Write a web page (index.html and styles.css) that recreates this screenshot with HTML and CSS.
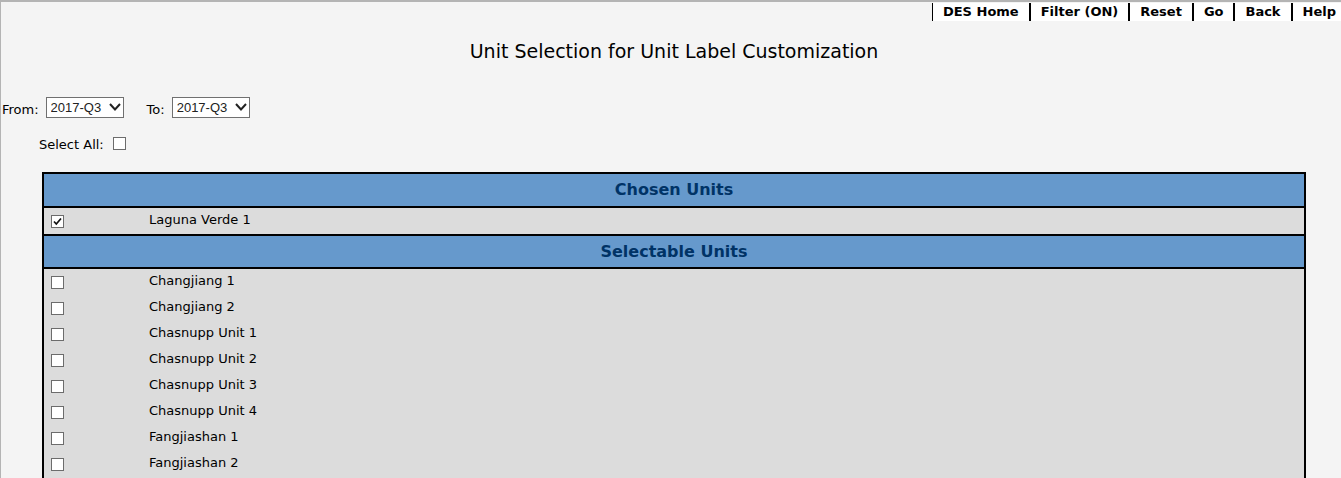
FILE: index.html
```html
<!DOCTYPE html>
<html lang="en">
<head>
<meta charset="utf-8">
<title>Unit Selection for Unit Label Customization</title>
<link rel="stylesheet" href="styles.css">
</head>
<body>
<nav class="menu">
  <a class="menu-item" href="#">DES Home</a>
  <a class="menu-item" href="#">Filter (ON)</a>
  <a class="menu-item" href="#">Reset</a>
  <a class="menu-item" href="#">Go</a>
  <a class="menu-item" href="#">Back</a>
  <a class="menu-item" href="#">Help</a>
</nav>
<h1 class="title">Unit Selection for Unit Label Customization</h1>
<form class="form">
  <div class="period">
    <div class="field">
      <label for="from">From:</label>
      <span class="picker">
        <select class="select" id="from"><option>2017-Q3</option></select>
        <svg class="arrow" viewBox="0 0 12 8" aria-hidden="true"><path d="M1 1 L6 6.5 L11 1"/></svg>
      </span>
    </div>
    <div class="field">
      <label for="to">To:</label>
      <span class="picker">
        <select class="select" id="to"><option>2017-Q3</option></select>
        <svg class="arrow" viewBox="0 0 12 8" aria-hidden="true"><path d="M1 1 L6 6.5 L11 1"/></svg>
      </span>
    </div>
  </div>
  <div class="select-all">
    <label for="all">Select All:</label>
    <input class="check" type="checkbox" id="all">
  </div>
  <table class="units">
    <tbody class="group">
      <tr><th class="heading" colspan="2">Chosen Units</th></tr>
      <tr><td class="pick"><input class="check" type="checkbox" id="u0" checked></td><td class="name"><label for="u0">Laguna Verde 1</label></td></tr>
    </tbody>
    <tbody class="group">
      <tr><th class="heading" colspan="2">Selectable Units</th></tr>
      <tr><td class="pick"><input class="check" type="checkbox" id="u1"></td><td class="name"><label for="u1">Changjiang 1</label></td></tr>
      <tr><td class="pick"><input class="check" type="checkbox" id="u2"></td><td class="name"><label for="u2">Changjiang 2</label></td></tr>
      <tr><td class="pick"><input class="check" type="checkbox" id="u3"></td><td class="name"><label for="u3">Chasnupp Unit 1</label></td></tr>
      <tr><td class="pick"><input class="check" type="checkbox" id="u4"></td><td class="name"><label for="u4">Chasnupp Unit 2</label></td></tr>
      <tr><td class="pick"><input class="check" type="checkbox" id="u5"></td><td class="name"><label for="u5">Chasnupp Unit 3</label></td></tr>
      <tr><td class="pick"><input class="check" type="checkbox" id="u6"></td><td class="name"><label for="u6">Chasnupp Unit 4</label></td></tr>
      <tr><td class="pick"><input class="check" type="checkbox" id="u7"></td><td class="name"><label for="u7">Fangjiashan 1</label></td></tr>
      <tr><td class="pick"><input class="check" type="checkbox" id="u8"></td><td class="name"><label for="u8">Fangjiashan 2</label></td></tr>
      <tr><td class="filler" colspan="2"></td></tr>
    </tbody>
  </table>
</form>
</body>
</html>
```

FILE: styles.css
```css
* { box-sizing: border-box; }

body {
  margin: 0;
  height: 100vh;
  overflow: hidden;
  border-top: 2px solid #b4b4b4;
  border-left: 1px solid #b4b4b4;
  background: #f4f4f4;
  color: #000;
  font: 13px/16px Verdana, "DejaVu Sans", sans-serif;
}

.menu {
  display: flex;
  justify-content: flex-end;
  padding-top: 1px;
}

.menu-item {
  padding: 1px 10px;
  border-left: 1px solid #000;
  border-right: 1px solid #000;
  background: #fff;
  color: #000;
  font-weight: bold;
  text-decoration: none;
}

.menu-item:last-child {
  padding-right: 5px;
  border-right: 0;
}

.title {
  margin: 18px 0 0;
  padding-left: 6px;
  font-size: 19px;
  font-weight: normal;
  line-height: 24px;
  text-align: center;
}

.period {
  display: flex;
  gap: 23px;
  margin: 34px 0 0 1px;
}

.field {
  display: flex;
  align-items: center;
  gap: 7px;
}

.field label { padding-top: 4px; }

.picker {
  position: relative;
  display: flex;
}

.select {
  appearance: none;
  width: 78px;
  height: 21px;
  padding: 0 0 1px 4px;
  border: 1px solid #707070;
  border-radius: 0;
  background: #fff;
  color: #222;
  font: 13px "Liberation Sans", Arial, sans-serif;
}

.arrow {
  position: absolute;
  right: 3px;
  top: 6px;
  width: 12px;
  height: 8px;
  fill: none;
  stroke: #222;
  stroke-width: 2;
  pointer-events: none;
}

.select-all {
  display: flex;
  align-items: flex-start;
  gap: 9px;
  margin: 19px 0 0 38px;
}

.check {
  appearance: none;
  display: block;
  width: 13px;
  height: 13px;
  margin: 0;
  border: 1px solid #6c6c6c;
  background: #fff;
}

.check:checked {
  background: #fff url("data:image/svg+xml,%3Csvg xmlns='http://www.w3.org/2000/svg' viewBox='0 0 11 11'%3E%3Cpath d='M2 5.5 4.3 8 9 2.5' fill='none' stroke='%23111' stroke-width='1.7'/%3E%3C/svg%3E");
}

.units {
  width: calc(100% - 76px);
  margin: 19px 35px 0 41px;
  border: 2px solid #000;
  border-spacing: 0;
  background: #dcdcdc;
}

.units td { padding: 0; vertical-align: top; }

.units .heading {
  height: 34px;
  padding: 0;
  border-bottom: 2px solid #000;
  background: #69c;
  color: #036;
  font-size: 16px;
  line-height: 30px;
}

.group + .group .heading {
  height: 35px;
  border-top: 2px solid #000;
}

.units .pick {
  width: 105px;
  height: 26px;
  padding: 7px 0 0 7px;
}

.units .name { padding-top: 4px; }

.units .filler { height: 26px; }
```
